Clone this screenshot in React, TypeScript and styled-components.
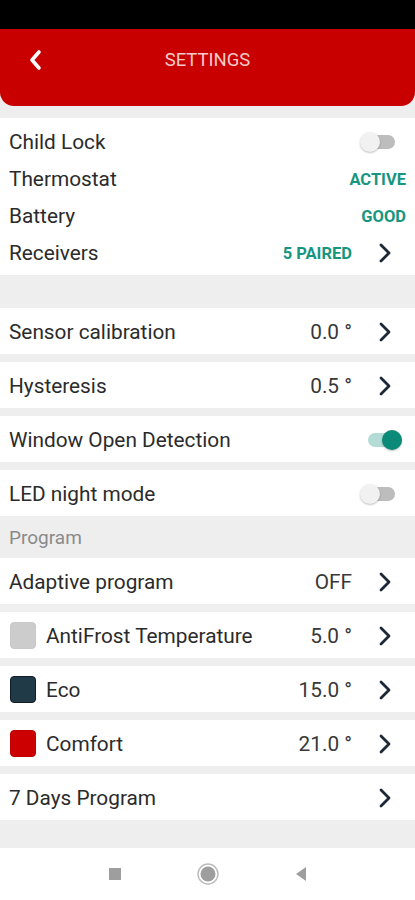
import styled, { createGlobalStyle } from "styled-components";

const GlobalStyle = createGlobalStyle`
  html, body {
    margin: 0;
    padding: 0;
    background: #eeeeee;
    font-family: Roboto, "Noto Sans", Arial, sans-serif;
  }
  * {
    box-sizing: border-box;
  }
`;

const Screen = styled.div`
  width: 415px;
  height: 900px;
  display: flex;
  flex-direction: column;
  background: #eeeeee;
  overflow: hidden;
`;

const StatusBar = styled.div`
  height: 29px;
  background: #000;
  flex-shrink: 0;
`;

const Header = styled.header`
  height: 77px;
  background: #c80000;
  border-radius: 0 0 14px 14px;
  display: flex;
  align-items: center;
  position: relative;
  flex-shrink: 0;
`;

const BackButton = styled.button`
  background: none;
  border: none;
  padding: 0;
  margin-left: 24px;
  width: 22px;
  height: 30px;
  display: flex;
  align-items: center;
  justify-content: center;
  margin-top: -15px;
`;

const Title = styled.h1`
  position: absolute;
  left: 0;
  right: 0;
  top: 20px;
  margin: 0;
  text-align: center;
  font-size: 18.5px;
  font-weight: 400;
  color: #f5caca;
  pointer-events: none;
`;

const Content = styled.div`
  flex: 1;
  display: flex;
  flex-direction: column;
  padding-top: 12px;
`;

const InfoSection = styled.section`
  background: #fff;
  padding: 5px 0 4px;
  margin-bottom: 33px;
`;

const InfoRow = styled.div`
  height: 37px;
  display: flex;
  align-items: center;
  padding: 1px 9px 0 9px;
`;

const Card = styled.div<{ $gap?: number }>`
  height: 46px;
  background: #fff;
  display: flex;
  align-items: center;
  padding: 2px 9px 0 9px;
  margin-bottom: ${(p) => p.$gap ?? 8}px;
`;

const Label = styled.span`
  flex: 1;
  font-size: 20.8px;
  color: #2b2b2b;
  display: flex;
  align-items: center;
  gap: 10px;
`;

const Value = styled.span`
  font-size: 20.8px;
  color: #383838;
  margin-right: 26px;
`;

const Status = styled.span<{ $withArrow?: boolean }>`
  font-size: 16.5px;
  font-weight: 700;
  color: #17967f;
  margin-right: ${(p) => (p.$withArrow ? "26px" : "0")};
`;

const Swatch = styled.span<{ $color: string; $border: string }>`
  width: 26px;
  height: 27px;
  border-radius: 4px;
  background: ${(p) => p.$color};
  border: 1px solid ${(p) => p.$border};
  flex-shrink: 0;
  margin-left: 1px;
  margin-top: -2px;
`;

const SectionHeader = styled.div`
  height: 42px;
  display: flex;
  align-items: center;
  padding: 1px 0 0 9px;
  font-size: 19px;
  color: #8a8a8a;
`;

const Track = styled.span<{ $on?: boolean }>`
  position: relative;
  width: 34px;
  height: 14px;
  border-radius: 7px;
  background: ${(p) => (p.$on ? "#b2dcd5" : "#bdbdbd")};
  margin-right: ${(p) => (p.$on ? "4px" : "11px")};
`;

const Knob = styled.span<{ $on?: boolean }>`
  position: absolute;
  top: -3px;
  left: ${(p) => (p.$on ? "14px" : "-1px")};
  width: 20px;
  height: 20px;
  border-radius: 50%;
  background: ${(p) => (p.$on ? "#0b8a77" : "#f1f1f1")};
  box-shadow: 0 1px 2px rgba(0, 0, 0, 0.25);
`;

const ChevronBox = styled.span`
  display: flex;
  margin-right: 14px;
`;

const Spacer = styled.div`
  flex: 1;
`;

const NavBar = styled.nav`
  height: 52px;
  background: #fff;
  display: flex;
  align-items: center;
  justify-content: center;
  gap: 74px;
  flex-shrink: 0;
`;

const Chevron = () => (
  <ChevronBox>
    <svg width="14" height="22" viewBox="0 0 14 22">
      <path
        d="M3 3 L11 11 L3 19"
        fill="none"
        stroke="#1b2835"
        strokeWidth="2.8"
        strokeLinecap="round"
        strokeLinejoin="round"
      />
    </svg>
  </ChevronBox>
);

const Toggle = ({ on }: { on?: boolean }) => (
  <Track $on={on}>
    <Knob $on={on} />
  </Track>
);

type ProgramRow = {
  label: string;
  value: string;
  swatch?: [string, string];
};

const programRows: ProgramRow[] = [
  { label: "Adaptive program", value: "OFF" },
  { label: "AntiFrost Temperature", value: "5.0 °", swatch: ["#cccccc", "#c8c8c8"] },
  { label: "Eco", value: "15.0 °", swatch: ["#213a48", "#111c24"] },
  { label: "Comfort", value: "21.0 °", swatch: ["#cc0000", "#c00000"] },
];

export default function App() {
  return (
    <Screen>
      <GlobalStyle />
      <StatusBar />
      <Header>
        <BackButton aria-label="Back">
          <svg width="16" height="24" viewBox="0 0 16 24">
            <path
              d="M12 4 L5 12 L12 20"
              fill="none"
              stroke="#fff"
              strokeWidth="3.6"
              strokeLinecap="round"
              strokeLinejoin="round"
            />
          </svg>
        </BackButton>
        <Title>SETTINGS</Title>
      </Header>
      <Content>
        <InfoSection>
          <InfoRow>
            <Label>Child Lock</Label>
            <Toggle />
          </InfoRow>
          <InfoRow>
            <Label>Thermostat</Label>
            <Status>ACTIVE</Status>
          </InfoRow>
          <InfoRow>
            <Label>Battery</Label>
            <Status>GOOD</Status>
          </InfoRow>
          <InfoRow>
            <Label>Receivers</Label>
            <Status $withArrow>5 PAIRED</Status>
            <Chevron />
          </InfoRow>
        </InfoSection>

        <Card>
          <Label>Sensor calibration</Label>
          <Value>0.0 °</Value>
          <Chevron />
        </Card>
        <Card>
          <Label>Hysteresis</Label>
          <Value>0.5 °</Value>
          <Chevron />
        </Card>
        <Card>
          <Label>Window Open Detection</Label>
          <Toggle on />
        </Card>
        <Card $gap={0}>
          <Label>LED night mode</Label>
          <Toggle />
        </Card>

        <SectionHeader>Program</SectionHeader>

        {programRows.map((row) => (
          <Card key={row.label}>
            <Label>
              {row.swatch && <Swatch $color={row.swatch[0]} $border={row.swatch[1]} />}
              {row.label}
            </Label>
            <Value>{row.value}</Value>
            <Chevron />
          </Card>
        ))}
        <Card $gap={0}>
          <Label>7 Days Program</Label>
          <Chevron />
        </Card>
        <Spacer />
      </Content>
      <NavBar>
        <svg width="14" height="14" viewBox="0 0 14 14">
          <rect x="1" y="1" width="12" height="12" fill="#9e9e9e" />
        </svg>
        <svg width="24" height="24" viewBox="0 0 24 24">
          <circle cx="12" cy="12" r="10" fill="none" stroke="#bdbdbd" strokeWidth="1.5" />
          <circle cx="12" cy="12" r="7.5" fill="#9e9e9e" />
        </svg>
        <svg width="14" height="16" viewBox="0 0 14 16">
          <path d="M12 1 L2 8 L12 15 Z" fill="#9e9e9e" />
        </svg>
      </NavBar>
    </Screen>
  );
}
